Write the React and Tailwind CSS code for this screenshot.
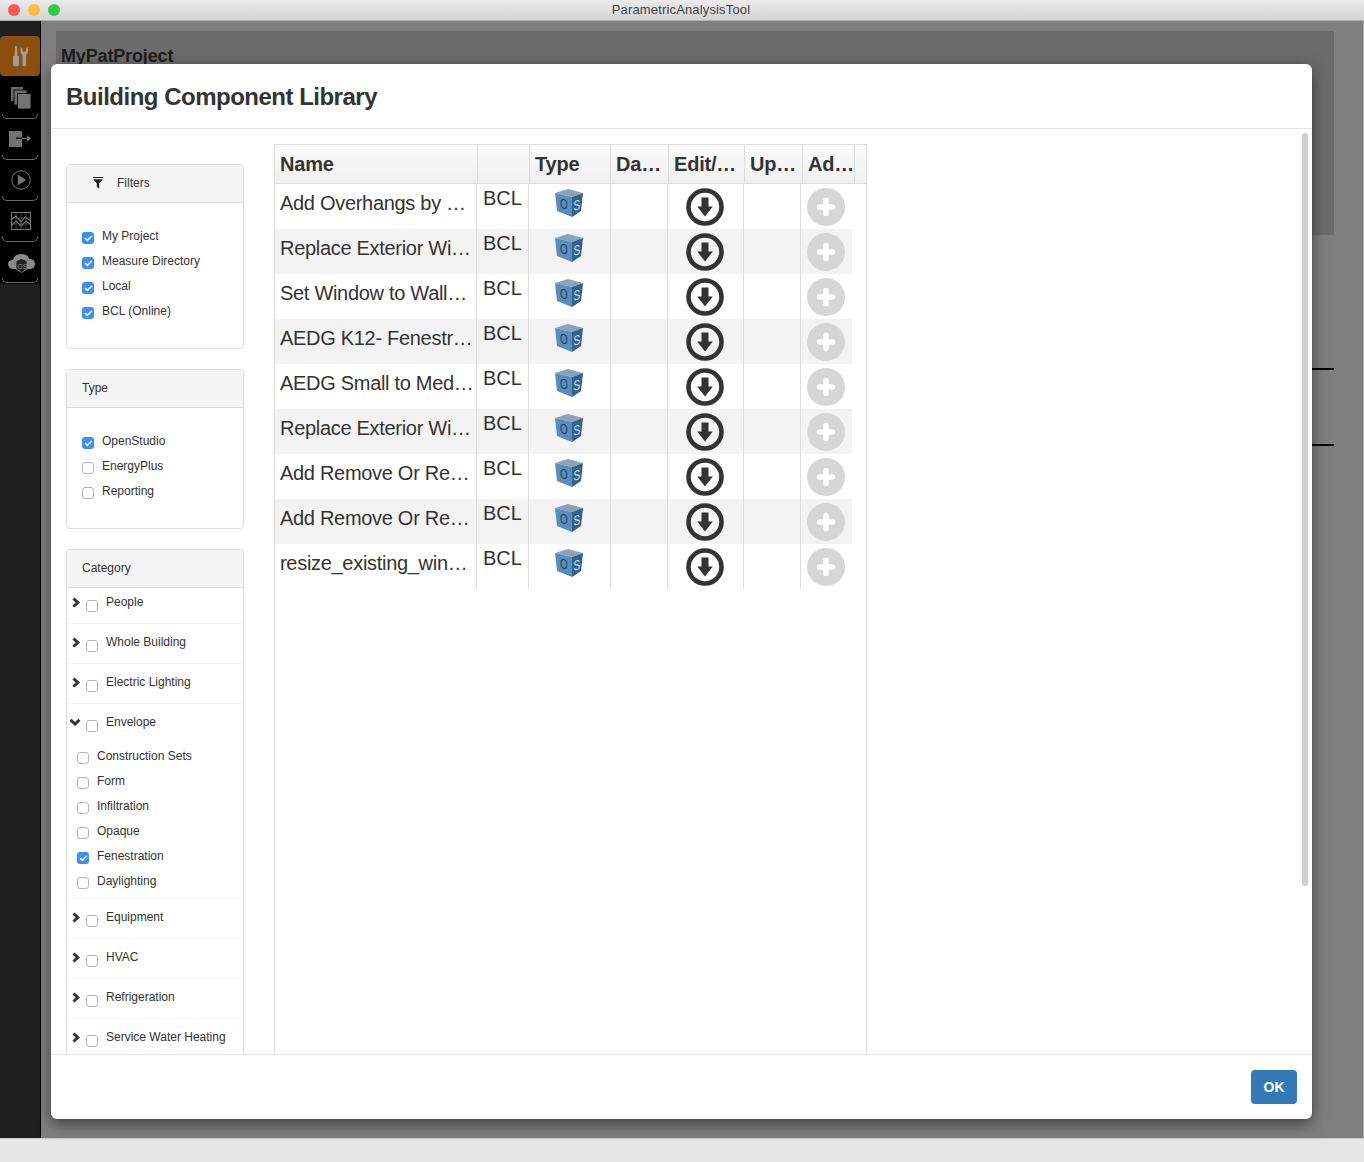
import { Check, Plus } from 'lucide-react'

const FONT = 'font-["Liberation_Sans",Arial,sans-serif]'

const rows = [
  'Add Overhangs by …',
  'Replace Exterior Wi…',
  'Set Window to Wall…',
  'AEDG K12- Fenestr…',
  'AEDG Small to Med…',
  'Replace Exterior Wi…',
  'Add Remove Or Re…',
  'Add Remove Or Re…',
  'resize_existing_win…',
]

const collapsedTop = ['People', 'Whole Building', 'Electric Lighting']
const collapsedBottom = ['Equipment', 'HVAC', 'Refrigeration', 'Service Water Heating']
const envelope = [
  ['Construction Sets', false],
  ['Form', false],
  ['Infiltration', false],
  ['Opaque', false],
  ['Fenestration', true],
  ['Daylighting', false],
]

function Box({ checked }) {
  if (checked) {
    return (
      <span className="flex h-3 w-3 shrink-0 items-center justify-center rounded-[3px] bg-[#3b8ff6]">
        <Check size={9} strokeWidth={4} className="text-white" />
      </span>
    )
  }
  return <span className="block h-3 w-3 shrink-0 rounded-[3px] border border-[#b5b5b5] bg-white" />
}

function CheckRow({ label, checked, indent = '' }) {
  return (
    <div className={`flex h-[25px] items-start ${indent}`}>
      <span className="mt-[6px]"><Box checked={checked} /></span>
      <span className="ml-2 text-xs leading-[20px] text-[#333]">{label}</span>
    </div>
  )
}

function PanelHead({ children }) {
  return (
    <div className="flex h-[38px] shrink-0 items-center rounded-t border-b border-[#ddd] bg-[#f5f5f5] pb-[2px] pl-[15px] text-xs text-[#333]">
      {children}
    </div>
  )
}

function CategoryRow({ label, first }) {
  return (
    <div className={`flex items-start border-b border-[#f3f3f3] ${first ? 'h-9' : 'h-10 pt-1'}`}>
      <svg width="10" height="11" viewBox="0 0 10 11" className="ml-1 mt-[9px] shrink-0">
        <path d="M2.5 1.5 L6.8 5.5 L2.5 9.5" fill="none" stroke="#333" strokeWidth="3" />
      </svg>
      <span className="ml-[5px] mt-3"><Box /></span>
      <span className="ml-2 mt-1 text-xs leading-[20px] text-[#333]">{label}</span>
    </div>
  )
}

function CubeIcon() {
  return (
    <svg width="30" height="30" viewBox="0 0 30 30" className="shrink-0">
      <path d="M1 5 L14 1 L29 5 L18 9 Z" fill="#8ba3ba" />
      <path d="M1 5 L18 9 L18 29 L3 23 Z" fill="#5a8cbc" />
      <path d="M18 9 L29 5 L27 23 L18 29 Z" fill="#33608c" />
      <text x="0" y="0" transform="matrix(1 0.2 0 1.4 6 20)" fontSize="10" fontFamily="Liberation Sans, sans-serif" fill="#1c3f60">O</text>
      <text x="0" y="0" transform="matrix(1 -0.3 0 1.4 19.5 23)" fontSize="10" fontFamily="Liberation Sans, sans-serif" fill="#d5e2ec">S</text>
    </svg>
  )
}

function DownloadIcon() {
  return (
    <svg width="38" height="38" viewBox="0 0 38 38" className="shrink-0">
      <circle cx="19" cy="19" r="16.5" fill="none" stroke="#333" strokeWidth="4.6" />
      <path d="M15.5 9.5 H22.5 V18.5 H26.8 L19 28.5 L11.2 18.5 H15.5 Z" fill="#333" />
    </svg>
  )
}

function AddIcon() {
  return (
    <span className="flex h-[38px] w-[38px] items-center justify-center rounded-full bg-[#d6d6d6]">
      <Plus size={22} strokeWidth={6} className="text-white" />
    </span>
  )
}

function ToolsIcon() {
  return (
    <svg width="15" height="21" viewBox="0 0 15 21" fill="#a59c90">
      <path d="M2 0 H4 L4.4 8 V10 H6 V18 Q6 20.5 3 20.5 Q0 20.5 0 18 V10 H1.6 V8 Z" />
      <path d="M7.5 1 V5.5 Q7.5 8 9.4 8.8 V18.5 Q9.4 20.5 11.2 20.5 Q13 20.5 13 18.5 V8.8 Q15 8 15 5.5 V1 L13 2.8 V5.5 H9.6 V2.8 Z" />
    </svg>
  )
}

function NavDivider() {
  return <div className="mx-[2px] h-[5px] rounded-b-md border-b border-l border-r border-[#6a6a6a]" />
}

function Sidebar() {
  return (
    <aside className="w-[41px] shrink-0 border-r border-black bg-[#1f1f1f] pt-[15px]">
      <nav className="bg-black pb-px">
        <div className="flex h-10 w-10 items-center justify-center rounded bg-[#8a4f0f]"><ToolsIcon /></div>
        <div className="flex h-[38px] items-end justify-center pb-[5px] pl-px">
          <svg width="20" height="22" viewBox="0 0 20 22">
            <rect x="0" y="0" width="12" height="14" fill="#6a6a6a" />
            <rect x="3" y="3" width="13" height="15" fill="#6e6e6e" stroke="#000" strokeWidth="0.8" />
            <rect x="6.5" y="6.5" width="13.5" height="15.5" fill="#737373" stroke="#000" strokeWidth="0.8" />
          </svg>
        </div>
        <NavDivider />
        <div className="flex h-9 items-end justify-center pb-2">
          <svg width="22" height="16" viewBox="0 0 22 16">
            <rect x="0" y="0" width="13" height="16" fill="#737373" />
            <path d="M7 7.3 H13" stroke="#000" strokeWidth="1.4" />
            <path d="M13 6.8 H18 V4 L22 7.4 L18 10.8 V8 H13 Z" fill="#737373" />
          </svg>
        </div>
        <NavDivider />
        <div className="flex h-9 items-end justify-center pb-[6px] pl-px">
          <svg width="20" height="20" viewBox="0 0 20 20">
            <circle cx="10" cy="10" r="9.3" fill="none" stroke="#777" strokeWidth="1" />
            <path d="M6.8 4.8 L15.2 10 L6.8 15.2 Z" fill="#777" />
          </svg>
        </div>
        <NavDivider />
        <div className="flex h-9 items-end justify-center pb-[7px] pl-px">
          <svg width="20" height="18" viewBox="0 0 20 18" fill="none" stroke="#777">
            <rect x="0.5" y="0.5" width="19" height="17" strokeWidth="1" />
            <path d="M0 6 H20 M0 12 H20 M5 0 V18 M10 0 V18 M15 0 V18" strokeWidth="0.5" />
            <path d="M0 8 L5 4 L10 10 L14 5 L20 9 M0 14 L5 9 L10 14 L15 9 L20 13" strokeWidth="1.2" />
          </svg>
        </div>
        <NavDivider />
        <div className="flex h-9 items-end justify-center pb-[5px] pl-[2px]">
          <svg width="27" height="20" viewBox="0 0 27 20">
            <path d="M6 16 Q0 16 0 11 Q0 7 5 7 Q6 1 13.5 1 Q20 1 21 6 Q27 6 27 11 Q27 16 21 16 Z" fill="#8a8a8a" />
            <path d="M8 8 L13.5 5.5 L19 8 V16 L13.5 19.5 L8 16 Z" fill="#222" stroke="#8a8a8a" strokeWidth="0.8" />
            <text x="9.3" y="15.5" fontSize="7" fontFamily="Liberation Sans, sans-serif" fill="#8a8a8a">OS</text>
          </svg>
        </div>
        <NavDivider />
      </nav>
    </aside>
  )
}

function ResultsTable() {
  return (
    <div className="ml-[30px] mt-[15px] flex w-[593px] shrink-0 flex-col border-l border-r border-t border-[#ddd]">
      <div className="flex h-[39px] shrink-0 border-b border-[#ddd] bg-gradient-to-b from-[#fbfbfb] to-[#f0f0f0] text-xl font-bold leading-[38px] tracking-[-0.2px] text-[#333]">
        <div className="w-[203px] border-r border-[#ddd] pl-[5px]">Name</div>
        <div className="w-[52px] border-r border-[#ddd]" />
        <div className="w-[81px] border-r border-[#ddd] pl-[5px]">Type</div>
        <div className="w-[58px] border-r border-[#ddd] pl-[5px]">Da…</div>
        <div className="w-[76px] border-r border-[#ddd] pl-[5px]">Edit/…</div>
        <div className="w-[58px] border-r border-[#ddd] pl-[5px]">Up…</div>
        <div className="w-[52px] border-r border-[#ddd] pl-[5px]">Ad…</div>
      </div>
      {rows.map((name, i) => (
        <div key={i} className={`flex h-[45px] w-[577px] shrink-0 text-xl text-[#333] ${i % 2 ? 'bg-[#f3f3f3]' : 'bg-white'}`}>
          <div className="w-[202px] whitespace-nowrap border-r border-[#ddd] pl-[5px] pt-[5px] leading-[28px] tracking-[-0.3px]">{name}</div>
          <div className="w-[52px] border-r border-[#ddd] pl-[6px] pt-px leading-[26px]">BCL</div>
          <div className="flex w-[82px] justify-center border-r border-[#ddd] pr-[2px] pt-[4px]"><CubeIcon /></div>
          <div className="w-[57px] border-r border-[#ddd]" />
          <div className="flex w-[76px] justify-center border-r border-[#ddd] pr-[2px] pt-[4px]"><DownloadIcon /></div>
          <div className="w-[57px] border-r border-[#ddd]" />
          <div className="flex flex-1 justify-center pr-[1px] pt-[4px]"><AddIcon /></div>
        </div>
      ))}
    </div>
  )
}

function Filters() {
  return (
    <div className="ml-[15px] flex w-[178px] shrink-0 flex-col gap-5 pt-[35px]">
      <section className="h-[185px] shrink-0 rounded border border-[#ddd]">
        <PanelHead>
          <svg width="10" height="12" viewBox="0 0 10 12" fill="#222" className="ml-[11px] mr-[14px]">
            <path d="M0 0 H10 V1 H0 Z M0 2.2 H10 L6.2 6.5 V11.5 L3.8 10 V6.5 Z" />
          </svg>
          Filters
        </PanelHead>
        <div className="pl-[15px] pt-[23px]">
          <CheckRow label="My Project" checked />
          <CheckRow label="Measure Directory" checked />
          <CheckRow label="Local" checked />
          <CheckRow label="BCL (Online)" checked />
        </div>
      </section>
      <section className="h-[160px] shrink-0 rounded border border-[#ddd]">
        <PanelHead>Type</PanelHead>
        <div className="pl-[15px] pt-[23px]">
          <CheckRow label="OpenStudio" checked />
          <CheckRow label="EnergyPlus" />
          <CheckRow label="Reporting" />
        </div>
      </section>
      <section className="shrink-0 rounded-t border-l border-r border-t border-[#ddd]">
        <PanelHead>Category</PanelHead>
        {collapsedTop.map((c, i) => <CategoryRow key={c} label={c} first={i === 0} />)}
        <div className="border-b border-[#f3f3f3] pb-[2px]">
          <div className="flex h-[42px] items-start pt-1">
            <svg width="12" height="9" viewBox="0 0 12 9" className="ml-[2px] mt-[10px] shrink-0">
              <path d="M1.5 1.8 L6 6 L10.5 1.8" fill="none" stroke="#333" strokeWidth="3" />
            </svg>
            <span className="ml-[5px] mt-3"><Box /></span>
            <span className="ml-2 mt-1 text-xs leading-[20px] text-[#333]">Envelope</span>
          </div>
          {envelope.map(([label, checked]) => (
            <CheckRow key={label} label={label} checked={checked} indent="pl-[10px]" />
          ))}
        </div>
        {collapsedBottom.map((c) => <CategoryRow key={c} label={c} />)}
      </section>
    </div>
  )
}

export default function App() {
  return (
    <div className={`relative flex h-[1162px] w-[1364px] flex-col overflow-hidden ${FONT}`}>
      {/* title bar */}
      <header className="relative flex h-[21px] shrink-0 items-center justify-center border-b border-[#b0b0b0] bg-gradient-to-b from-[#ebebeb] to-[#d4d4d4] pr-[2px] text-[13px] tracking-[0.15px] text-[#444]">
        <div className="absolute left-2 flex gap-2">
          <span className="h-3 w-3 rounded-full bg-[#fc5753]" />
          <span className="h-3 w-3 rounded-full bg-[#fdbc40]" />
          <span className="h-3 w-3 rounded-full bg-[#34c84a]" />
        </div>
        ParametricAnalysisTool
      </header>

      {/* dimmed app behind the dialog */}
      <div className="flex min-h-0 flex-1">
        <Sidebar />
        <main className="flex-1 border-r border-[#aaa] bg-[#7f7f7f] pl-[15px] pr-[29px] pt-[10px]">
          <div className="h-[204px] bg-[#6b6b6b] pl-[5px] pt-[15px] text-lg font-bold leading-5 tracking-[-0.15px] text-[#1d1d1d]">MyPatProject</div>
          <div className="mt-[133px] h-[2px] bg-black" />
          <div className="mt-[74px] h-[2px] bg-black" />
        </main>
      </div>
      <footer className="h-6 shrink-0 border-t border-[#c8c8c8] bg-[#e6e6e6]" />

      {/* dialog */}
      <div className="absolute left-[51px] top-[64px] flex h-[1055px] w-[1261px] flex-col rounded-md bg-white shadow-[0_5px_15px_rgba(0,0,0,0.5)]">
        <div className="flex h-[65px] shrink-0 items-center border-b border-[#e5e5e5] pl-[15px] pt-[2px] text-2xl font-bold tracking-[-0.5px] text-[#333]">
          Building Component Library
        </div>
        <div className="relative flex min-h-0 flex-1 overflow-hidden">
          <Filters />
          <ResultsTable />
          <div className="absolute left-[1251px] top-1 h-[753px] w-[6px] rounded-full bg-[#d0d0d0]" />
        </div>
        <div className="flex h-[65px] shrink-0 items-start justify-end border-t border-[#e5e5e5] pr-[15px] pt-[15px]">
          <button type="button" className="h-[34px] w-[46px] rounded bg-[#337ab7] text-sm font-bold text-white">OK</button>
        </div>
      </div>
    </div>
  )
}
